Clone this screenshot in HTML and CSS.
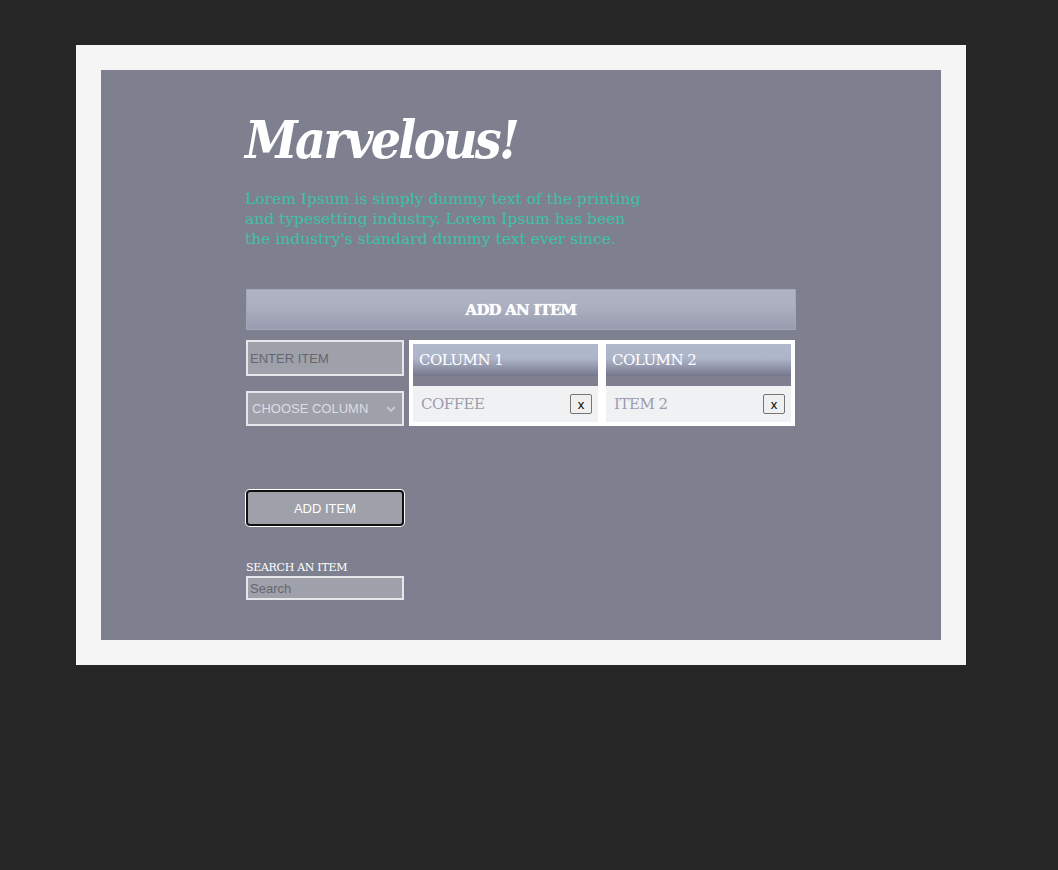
FILE: index.html
```html
<!DOCTYPE html>
<html>
<head>
<meta charset="utf-8">
<link rel="stylesheet" href="styles.css">
</head>
<body>
<div class="frame">
  <div class="panel">
    <h1 class="title">Marvelous!</h1>
    <p class="intro">Lorem Ipsum is simply dummy text of the printing and typesetting industry. Lorem Ipsum has been the industry's standard dummy text ever since.</p>
    <div class="bar">ADD AN ITEM</div>
    <div class="work">
      <div class="controls">
        <input class="field" type="text" placeholder="ENTER ITEM">
        <div class="select">
          <span>CHOOSE COLUMN</span>
          <svg width="10" height="6" viewBox="0 0 10 6"><path d="M1 1l4 4 4-4" fill="none" stroke="#c8c9d0" stroke-width="1.8"/></svg>
        </div>
        <button class="add">ADD ITEM</button>
        <label class="search-label">SEARCH AN ITEM</label>
        <input class="search" type="text" placeholder="Search">
      </div>
      <div class="board">
        <div class="column">
          <div class="col-head">COLUMN 1</div>
          <div class="item"><span>COFFEE</span><button class="del">x</button></div>
        </div>
        <div class="column">
          <div class="col-head">COLUMN 2</div>
          <div class="item"><span>ITEM 2</span><button class="del">x</button></div>
        </div>
      </div>
    </div>
  </div>
</div>
</body>
</html>
```

FILE: styles.css
```css
html, body {
  margin: 0;
  background: #262626;
}
body {
  padding: 45px 0 0 76px;
}
.frame {
  width: 890px;
  box-sizing: border-box;
  padding: 25px;
  background: #f5f5f5;
}
.panel {
  height: 570px;
  box-sizing: border-box;
  background: #7e8090;
  padding: 33px 0 0 144px;
  font-family: "DejaVu Serif", serif;
}
.title {
  margin: 0;
  color: #fff;
  font-family: "DejaVu Serif Condensed", "DejaVu Serif", serif;
  font-stretch: condensed;
  font-style: italic;
  font-weight: bold;
  font-size: 53px;
  line-height: 72px;
  letter-spacing: -2.7px;
}
.intro {
  margin: 14px 0 0;
  width: 402px;
  color: #3fc2a2;
  font-size: 15.5px;
  line-height: 20px;
}
.bar {
  margin: 40px 0 0 1px;
  width: 550px;
  height: 41px;
  box-sizing: border-box;
  border: 1px solid #a3a7ba;
  background: linear-gradient(#afb3c3 0%, #abafc0 45%, #979bae 100%);
  color: #fff;
  font-weight: bold;
  font-size: 15px;
  letter-spacing: -0.8px;
  display: flex;
  align-items: center;
  justify-content: center;
  text-shadow: 0 0 1px #fff;
}
.work {
  display: flex;
  gap: 5px;
  margin: 10px 0 0 1px;
}
.controls {
  width: 158px;
  display: flex;
  flex-direction: column;
}
.field {
  height: 36px;
  box-sizing: border-box;
  border: 2px solid #e6e7ea;
  background: #9ea0aa;
  padding: 0 2px;
  font-family: "Liberation Sans", Arial, sans-serif;
  font-size: 13px;
  color: #333;
  outline: none;
}
.field::placeholder {
  color: #66676d;
}
.select {
  margin-top: 15px;
  height: 35px;
  box-sizing: border-box;
  border: 2px solid #e6e7ea;
  background: #9ea0aa;
  display: flex;
  align-items: center;
  justify-content: space-between;
  padding: 0 6px 0 4px;
  font-family: "Liberation Sans", Arial, sans-serif;
  font-size: 13px;
  color: #dcdde2;
}
.add {
  margin-top: 64px;
  height: 36px;
  box-sizing: border-box;
  border: 2px solid #111;
  border-radius: 4px;
  box-shadow: 0 0 0 1px #fff;
  background: #9ea0aa;
  color: #fff;
  font-family: "Liberation Sans", Arial, sans-serif;
  font-size: 13px;
  padding: 0;
}
.search-label {
  margin-top: 35px;
  color: #fff;
  font-size: 11px;
  line-height: 14px;
  letter-spacing: -0.3px;
}
.search {
  margin-top: 1px;
  height: 24px;
  box-sizing: border-box;
  border: 2px solid #e6e7ea;
  background: #9ea0aa;
  padding: 0 2px;
  font-family: "Liberation Sans", Arial, sans-serif;
  font-size: 13px;
  outline: none;
}
.search::placeholder {
  color: #66676d;
}
.board {
  align-self: flex-start;
  display: flex;
  gap: 8px;
  padding: 4px;
  background: #fff;
}
.column {
  width: 185px;
  background: #7e8090;
  display: flex;
  flex-direction: column;
}
.col-head {
  height: 32px;
  margin-bottom: 10px;
  box-sizing: border-box;
  padding: 7px 0 0 6px;
  background: linear-gradient(#b0b8cc 0%, #aeb5c9 45%, #8a8ea2 80%, #74778c 100%);
  color: #fff;
  font-size: 15px;
  letter-spacing: -0.5px;
}
.item {
  height: 36px;
  background: #f0f1f3;
  display: flex;
  align-items: center;
  justify-content: space-between;
  padding: 0 6px 0 8px;
  color: #9b9dad;
  font-size: 15px;
  letter-spacing: -0.5px;
}
.del {
  width: 22px;
  height: 20px;
  padding: 0;
  border: 1px solid #767676;
  border-radius: 2px;
  background: #efefef;
  font-family: "Liberation Sans", Arial, sans-serif;
  font-size: 13px;
  color: #000;
}
```
